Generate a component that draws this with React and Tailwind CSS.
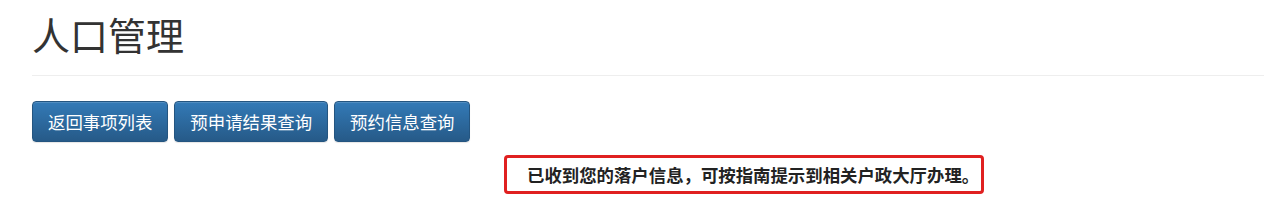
const buttons = ['返回事项列表', '预申请结果查询', '预约信息查询'];

export default function App() {
    return (
        <div className="min-h-screen bg-white pl-8 pt-[8px]" style={{ fontFamily: '"Noto Sans CJK SC", "Noto Sans", sans-serif' }}>
            <h1 className="text-[38px] leading-[52px] text-[#333] font-normal">人口管理</h1>
            <div className="mt-[15px] border-t border-[#eee]"></div>

            <div className="mt-[25px] flex gap-[6px]">
                {buttons.map((b) => (
                    <button
                        key={b}
                        className="h-[41px] px-[15px] rounded-[4px] border border-[#245580] bg-gradient-to-b from-[#337ab7] to-[#265a88] text-white text-[17.4px] leading-none shadow-[inset_0_1px_0_rgba(255,255,255,0.15),0_1px_1px_rgba(0,0,0,0.1)]"
                    >
                        {b}
                    </button>
                ))}
            </div>

            <div className="ml-[472px] mt-[13px] w-[480px] h-[39px] border-[3px] border-[#e02020] rounded-[4px] flex items-center pl-[20px]">
                <span className="text-[17.4px] font-bold text-[#222] leading-none">已收到您的落户信息，可按指南提示到相关户政大厅办理。</span>
            </div>
        </div>
    );
}
